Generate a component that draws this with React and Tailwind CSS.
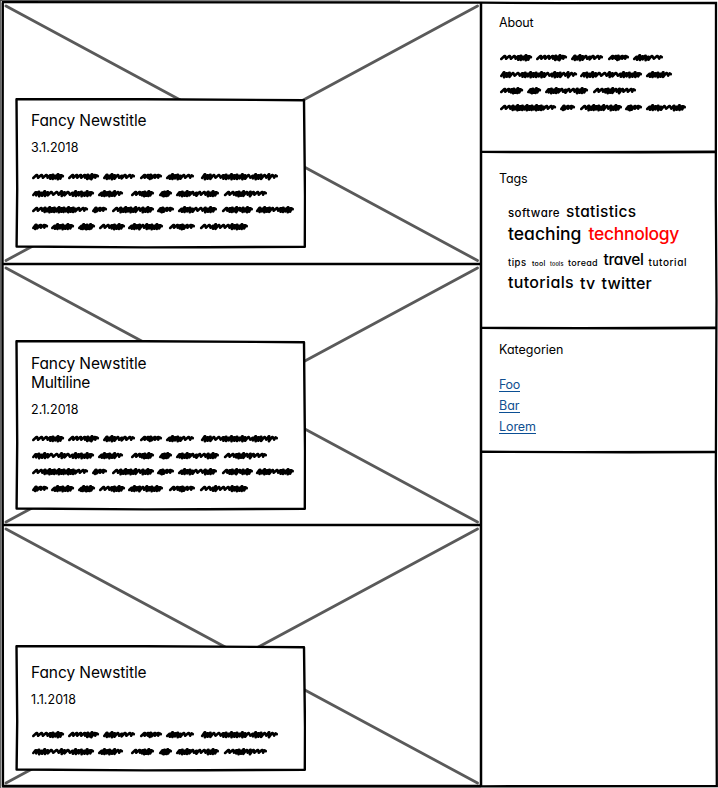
import { useLayoutEffect, useRef, useState } from "react";

// Text spread by letter spacing so that it fills a given width.
function Fit({ w, children, className = "" }) {
  const ref = useRef(null);
  const [spacing, setSpacing] = useState(0);
  useLayoutEffect(() => {
    const natural = ref.current.getBoundingClientRect().width;
    setSpacing((w - natural) / children.length);
  }, [w, children]);
  return (
    <span ref={ref} className={`inline-block whitespace-nowrap ${className}`} style={{ letterSpacing: `${spacing}px` }}>
      {children}
    </span>
  );
}

// Each word is [start, end, strokes]: m = dense stroke, n = open stroke.
const BODY = [
  [[0, 32, "nnnmmmmm"], [36, 67, "nnnnmmmn"], [71, 103, "mmmmnmnn"], [108, 130, "nnmmnn"], [134, 162, "mmmmmnn"], [169, 246, "mmmnnmmmmmmmmmnmmmmnmn"]],
  [[0, 62, "mmmmmnnmmnmmmmmmm"], [66, 91, "mmmmmmn"], [99, 122, "nnmmmmm"], [127, 140, "mmmmm"], [144, 187, "mmmmmnmnnmmmm"], [192, 235, "nnmmmmnmnnn"]],
  [[0, 56, "nnmmmmmmmmmmmmmmnn"], [60, 75, "mmnn"], [80, 122, "nmmmmmmmnmmmm"], [125, 142, "mmmnn"], [146, 185, "mmmmmnnmmmm"], [190, 221, "nmmmmnmmmm"], [224, 262, "mmmmmnnmmmmm"]],
  [[0, 16, "mmnn"], [19, 42, "mmmmmmm"], [46, 63, "mmmmmmm"], [67, 93, "nnmmmmm"], [96, 131, "mmmmnmmmmmm"], [137, 163, "nnmmmnn"], [168, 216, "nnmmnnnmmmmmm"]],
];

const ABOUT = [
  [[0, 32, "nnnmmmmm"], [36, 67, "nnnnmmmn"], [71, 103, "mmmmnmnn"], [108, 129, "nnmmnn"], [133, 163, "mmmmmnn"]],
  [[0, 77, "mmmnnmmmmmmmmmnmmmmnmn"], [80, 142, "mmmmmnnmmnmmmmmmm"], [146, 172, "mmmmmmn"]],
  [[0, 23, "nnmmmmm"], [27, 41, "mmmmm"], [45, 88, "mmmmmnmnnmmmm"], [93, 136, "nnmmmmnmnnn"]],
  [[0, 56, "nnmmmmmmmmmmmmmmnn"], [60, 75, "mmnn"], [80, 122, "nmmmmmmmnmmmm"], [125, 142, "mmmnn"], [146, 186, "mmmmmnnmmmm"]],
];

function wordPath([start, end, strokes]) {
  const units = [...strokes].map((s) => (s === "m" ? 1 : 1.9));
  const total = units.reduce((a, b) => a + b, 0);
  const scale = (end - start - 5) / total;
  let x = start + 1.2;
  let d = `M${x} 10`;
  units.forEach((u, i) => {
    const dense = strokes[i] === "m";
    const top = dense ? [6.7, 7.2, 6.4, 7.7][(i * 3 + strokes.length) % 4] : 7;
    const low = dense ? [11, 10.4, 11.3, 10.8][(i + strokes.length) % 4] : 9.7;
    const rise = dense ? 3 : 3.8;
    d += `L${(x + rise - 0.6).toFixed(1)} ${top.toFixed(1)}L${(x + rise).toFixed(1)} ${top.toFixed(1)}`;
    x += u * scale;
    d += `L${x.toFixed(1)} ${low.toFixed(1)}`;
  });
  d += `L${end - 2.4} 7.4L${end - 1.2} 8.2`;
  return d;
}

function Scribble({ lines }) {
  return (
    <div className="flex flex-col">
      {lines.map((words, i) => (
        <svg key={i} className="block h-[16.7px] w-[264px] overflow-visible" viewBox="0 0 264 16.7" fill="none" stroke="#000" strokeWidth="2.6" strokeLinecap="round" strokeLinejoin="round">
          {words.map((word, j) => <path key={j} d={wordPath(word)} />)}
        </svg>
      ))}
    </div>
  );
}

function Card({ h, className, titles, date, dateWidth, lines, gap }) {
  return (
    <div className={`relative ml-[15px] w-[291px] pl-4 ${className}`}>
      <svg className="absolute inset-0 h-full w-full" viewBox={`0 0 291 ${h}`} fill="#fff" stroke="#000" strokeWidth="2.4" strokeLinejoin="round">
        <path d={`M1.5 1.2L130 1.2L289 2.2L290 ${h * 0.65}L289.8 ${h - 2.2}L190 ${h - 1.8}L130 ${h - 1.6}L1.6 ${h - 2.5}L2.2 ${h * 0.6}Z`} />
      </svg>
      <div className="relative flex flex-col">
        {titles.map(([text, w]) => (
          <h2 key={text} className="flex h-[19px] text-[15.5px] leading-[19px] font-[430]"><Fit w={w}>{text}</Fit></h2>
        ))}
        <p className="mt-[10.4px] flex h-4 text-[12.5px] leading-4 font-[430]"><Fit w={dateWidth}>{date}</Fit></p>
        <div className={`pl-px ${gap}`}><Scribble lines={lines} /></div>
      </div>
    </div>
  );
}

function News({ h, top, bottom, className, children }) {
  return (
    <article className={`relative flex flex-col ${className}`}>
      <svg className="absolute inset-0 h-full w-full overflow-visible" viewBox={`0 0 481 ${h}`} fill="none">
        <path d={`M6 ${top}L477.5 ${bottom}M477.5 ${top}L6 ${bottom}`} stroke="#5a5a5a" strokeWidth="2.8" strokeLinecap="round" />
        <path d={`M2.8 ${h}L481 ${h}`} stroke="#000" strokeWidth="2.6" />
      </svg>
      {children}
    </article>
  );
}

function Tag({ w, size, className = "", children }) {
  return <Fit w={w} className={`${size} ${className}`}>{children}</Fit>;
}

function Rule({ last }) {
  return (
    <svg className="absolute bottom-0 left-0 h-1 w-[235px]" viewBox="0 0 237 4" preserveAspectRatio="none">
      <path d={last ? "M0 .6L90 1.1L237 .8V3.2L150 3.6L0 3Z" : "M0 .7L100 1L237 .5V3.2L160 3.4L0 3.1Z"} />
    </svg>
  );
}

export default function App() {
  return (
    <div className="relative flex h-[788px] w-[718px] overflow-hidden bg-white font-[Inter,'Open_Sans',sans-serif] text-black [font-feature-settings:'cv11','calt'_0]">
      <main className="flex w-[481px] flex-col">
        <News h={264} top={6} bottom={260.5} className="h-[264px] pt-[98px]">
          <Card h={151} className="h-[151px] pt-[13px]" titles={[["Fancy Newstitle", 115.5]]} date="3.1.2018" dateWidth={47.5} lines={BODY} gap="mt-[11.6px]" />
        </News>
        <News h={261} top={4} bottom={258} className="h-[261px] pt-[76px]">
          <Card h={171} className="h-[171px] pt-[14px]" titles={[["Fancy Newstitle", 115.5], ["Multiline", 59]]} date="2.1.2018" dateWidth={47.5} lines={BODY} gap="mt-[11.6px]" />
        </News>
        <News h={261} top={4} bottom={258} className="h-[261px] pt-[120px]">
          <Card h={127} className="h-[127px] pt-[18px]" titles={[["Fancy Newstitle", 115.5]]} date="1.1.2018" dateWidth={45} lines={BODY.slice(0, 2)} gap="mt-[18px]" />
        </News>
      </main>

      <aside className="flex w-[237px] flex-col">
        <section className="relative h-[154px] pl-[18px] pt-[15px]">
          <h3 className="flex h-4 text-[12.5px] leading-4 font-[430]"><Fit w={34.5}>About</Fit></h3>
          <div className="mt-[18px] pl-px"><Scribble lines={ABOUT} /></div>
          <Rule />
        </section>
        <section className="relative h-[176px] pl-[18px] pt-[17px]">
          <h3 className="flex h-4 text-[12.5px] leading-4 font-[430]"><Fit w={28.5}>Tags</Fit></h3>
          <div className="flex flex-col pl-[9px] pt-[14px] font-[470]">
            <div className="flex h-[21px] items-baseline gap-[6px] leading-[22px]">
              <Tag w={52} size="text-[11.5px]">software</Tag>
              <Tag w={70.5} size="text-[15.5px]">statistics</Tag>
            </div>
            <div className="flex h-[24px] items-baseline gap-[7px] leading-[24px]">
              <Tag w={73.5} size="text-[17.5px]">teaching</Tag>
              <Tag w={90.5} size="text-[17.5px]" className="text-[#ff0000]">technology</Tag>
            </div>
            <div className="flex h-[25px] items-baseline pt-[3px] leading-[24px]">
              <Tag w={18.5} size="text-[9.5px]">tips</Tag>
              <Tag w={13.5} size="text-[7px]" className="ml-[5.5px]">tool</Tag>
              <Tag w={13.5} size="text-[5.5px]" className="ml-[4.5px]">tools</Tag>
              <Tag w={30} size="text-[9px]" className="ml-[4.5px]">toread</Tag>
              <Tag w={40} size="text-[15.5px]" className="relative -top-px ml-[5.5px]">travel</Tag>
              <Tag w={38.5} size="text-[10px]" className="ml-[5px]">tutorial</Tag>
            </div>
            <div className="flex h-[22px] items-baseline gap-[6px] leading-[22px]">
              <Tag w={66} size="text-[16px]">tutorials</Tag>
              <Tag w={15.5} size="text-[16px]" className="relative top-px">tv</Tag>
              <Tag w={50.5} size="text-[16px]" className="relative top-px">twitter</Tag>
            </div>
          </div>
          <Rule />
        </section>
        <section className="relative h-[124px] pl-[18px] pt-[12px]">
          <h3 className="flex h-4 text-[12.5px] leading-4 font-[430]"><Fit w={64.5}>Kategorien</Fit></h3>
          <nav className="flex flex-col items-start gap-[5px] pt-[18px] text-[12.5px] leading-[17px] text-[#104f90]">
            <a className="flex h-4 border-b border-[#0b4f94]"><Fit w={21}>Foo</Fit></a>
            <a className="flex h-4 border-b border-[#0b4f94]"><Fit w={20.5}>Bar</Fit></a>
            <a className="flex h-4 border-b border-[#0b4f94]"><Fit w={37}>Lorem</Fit></a>
          </nav>
          <Rule last />
        </section>
      </aside>

      {/* Hand-drawn outline of the page and the column divider */}
      <svg className="pointer-events-none absolute inset-0 h-full w-full" viewBox="0 0 718 788" fill="none" stroke="#000" strokeWidth="2.3">
        <path d="M.7 0V788" stroke="#555" strokeWidth="1.2" />
        <path d="M0 .6H90L400 1.2" stroke="#444" strokeWidth="1" />
        <path d="M2.8 2.5L2.5 300L3 786" />
        <path d="M2 2.2L480 2.6L560 3.2L716 2.8L715.8 200L716.5 300L715.8 480L716.8 786L480 786.3L2 786.3" />
        <path d="M481 2.5V787" strokeWidth="2.5" />
      </svg>
    </div>
  );
}
